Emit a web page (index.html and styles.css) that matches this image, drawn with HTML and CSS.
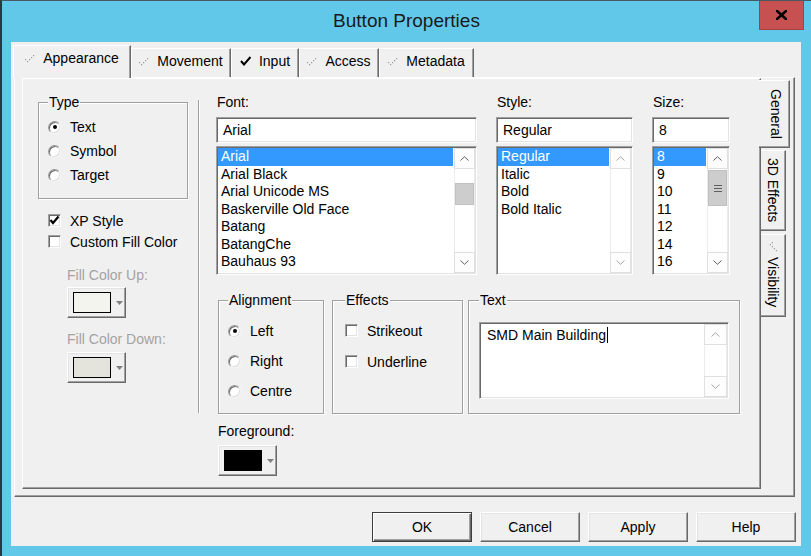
FILE: index.html
```html
<!DOCTYPE html>
<html lang="en">
<head>
    <meta charset="UTF-8">
    <title>Button Properties</title>
    <link rel="stylesheet" href="styles.css">
</head>
<body>
    <div class="window">
        <div class="titlebar">
            <div class="title">Button Properties</div>
            <div class="close">
                <svg width="11" height="10" viewBox="0 0 11 10"><path d="M1 1L10 9M10 1L1 9" stroke="#000" stroke-width="2.6" stroke-linecap="square"/></svg>
            </div>
        </div>

        <div class="client">
            <div class="tabstrip">
                <div class="tab active tab-appearance">
                    <svg class="dots" width="10" height="8" viewBox="0 0 10 8"><g fill="#9a9a9a"><rect x="0" y="4" width="1.2" height="1.2"/><rect x="2" y="6" width="1.2" height="1.2"/><rect x="4" y="4" width="1.2" height="1.2"/><rect x="6" y="2" width="1.2" height="1.2"/><rect x="8" y="0" width="1.2" height="1.2"/></g></svg>
                    <span>Appearance</span>
                </div>
                <div class="tab tab-movement">
                    <svg class="dots" width="10" height="8" viewBox="0 0 10 8"><g fill="#9a9a9a"><rect x="0" y="4" width="1.2" height="1.2"/><rect x="2" y="6" width="1.2" height="1.2"/><rect x="4" y="4" width="1.2" height="1.2"/><rect x="6" y="2" width="1.2" height="1.2"/><rect x="8" y="0" width="1.2" height="1.2"/></g></svg>
                    <span>Movement</span>
                </div>
                <div class="tab tab-input">
                    <svg width="11" height="10" viewBox="0 0 11 10"><polyline points="1,5 4,8.5 10.5,1" fill="none" stroke="#000" stroke-width="2"/></svg>
                    <span>Input</span>
                </div>
                <div class="tab tab-access">
                    <svg class="dots" width="10" height="8" viewBox="0 0 10 8"><g fill="#9a9a9a"><rect x="0" y="4" width="1.2" height="1.2"/><rect x="2" y="6" width="1.2" height="1.2"/><rect x="4" y="4" width="1.2" height="1.2"/><rect x="6" y="2" width="1.2" height="1.2"/><rect x="8" y="0" width="1.2" height="1.2"/></g></svg>
                    <span>Access</span>
                </div>
                <div class="tab tab-metadata">
                    <svg class="dots" width="10" height="8" viewBox="0 0 10 8"><g fill="#9a9a9a"><rect x="0" y="4" width="1.2" height="1.2"/><rect x="2" y="6" width="1.2" height="1.2"/><rect x="4" y="4" width="1.2" height="1.2"/><rect x="6" y="2" width="1.2" height="1.2"/><rect x="8" y="0" width="1.2" height="1.2"/></g></svg>
                    <span>Metadata</span>
                </div>
            </div>

            <div class="tabpanel">
                <div class="page">
                    <div class="left-col">
                        <fieldset class="group type-group">
                            <legend>Type</legend>
                            <div class="opt"><span class="radio on"></span>Text</div>
                            <div class="opt"><span class="radio"></span>Symbol</div>
                            <div class="opt"><span class="radio"></span>Target</div>
                        </fieldset>

                        <div class="check-row first">
                            <span class="check"><svg width="11" height="11" viewBox="0 0 11 11"><polyline points="1.5,5 4,8 9.5,1.5" fill="none" stroke="#000" stroke-width="2.2"/></svg></span>
                            XP Style
                        </div>
                        <div class="check-row"><span class="check"></span>Custom Fill Color</div>

                        <div class="fill-label">Fill Color Up:</div>
                        <div class="color-btn indent">
                            <span class="swatch up"></span>
                            <svg width="7" height="4" viewBox="0 0 7 4"><polygon points="0,0 7,0 3.5,4" fill="#808080"/></svg>
                        </div>
                        <div class="fill-label second">Fill Color Down:</div>
                        <div class="color-btn indent down-btn">
                            <span class="swatch down"></span>
                            <svg width="7" height="4" viewBox="0 0 7 4"><polygon points="0,0 7,0 3.5,4" fill="#808080"/></svg>
                        </div>
                    </div>

                    <div class="separator"></div>

                    <div class="props">
                        <div class="font-row">
                            <div class="font-col col-font">
                                <div class="label">Font:</div>
                                <div class="edit">Arial</div>
                                <div class="listbox">
                                    <div class="items">
                                        <div class="item sel">Arial</div>
                                        <div class="item">Arial Black</div>
                                        <div class="item">Arial Unicode MS</div>
                                        <div class="item">Baskerville Old Face</div>
                                        <div class="item">Batang</div>
                                        <div class="item">BatangChe</div>
                                        <div class="item">Bauhaus 93</div>
                                        <div class="item">Bell MT</div>
                                    </div>
                                    <div class="scrollbar">
                                        <div class="sb-btn"><svg width="9" height="5" viewBox="0 0 9 5"><polyline points="0.5,4.5 4.5,0.7 8.5,4.5" fill="none" stroke="#606060"/></svg></div>
                                        <div class="sb-track"><div class="sb-thumb font-thumb"></div></div>
                                        <div class="sb-btn"><svg width="9" height="5" viewBox="0 0 9 5"><polyline points="0.5,0.5 4.5,4.3 8.5,0.5" fill="none" stroke="#606060"/></svg></div>
                                    </div>
                                </div>
                            </div>

                            <div class="font-col col-style">
                                <div class="label">Style:</div>
                                <div class="edit">Regular</div>
                                <div class="listbox">
                                    <div class="items">
                                        <div class="item sel">Regular</div>
                                        <div class="item">Italic</div>
                                        <div class="item">Bold</div>
                                        <div class="item">Bold Italic</div>
                                    </div>
                                    <div class="scrollbar">
                                        <div class="sb-btn"><svg width="9" height="5" viewBox="0 0 9 5"><polyline points="0.5,4.5 4.5,0.7 8.5,4.5" fill="none" stroke="#a6a6a6"/></svg></div>
                                        <div class="sb-track"></div>
                                        <div class="sb-btn"><svg width="9" height="5" viewBox="0 0 9 5"><polyline points="0.5,0.5 4.5,4.3 8.5,0.5" fill="none" stroke="#a6a6a6"/></svg></div>
                                    </div>
                                </div>
                            </div>

                            <div class="font-col col-size">
                                <div class="label">Size:</div>
                                <div class="edit">8</div>
                                <div class="listbox">
                                    <div class="items">
                                        <div class="item sel">8</div>
                                        <div class="item">9</div>
                                        <div class="item">10</div>
                                        <div class="item">11</div>
                                        <div class="item">12</div>
                                        <div class="item">14</div>
                                        <div class="item">16</div>
                                        <div class="item">18</div>
                                    </div>
                                    <div class="scrollbar">
                                        <div class="sb-btn"><svg width="9" height="5" viewBox="0 0 9 5"><polyline points="0.5,4.5 4.5,0.7 8.5,4.5" fill="none" stroke="#606060"/></svg></div>
                                        <div class="sb-track">
                                            <div class="sb-thumb size-thumb">
                                                <svg width="8" height="7" viewBox="0 0 8 7"><path d="M0 0.5H8M0 3.5H8M0 6.5H8" stroke="#606060"/></svg>
                                            </div>
                                        </div>
                                        <div class="sb-btn"><svg width="9" height="5" viewBox="0 0 9 5"><polyline points="0.5,0.5 4.5,4.3 8.5,0.5" fill="none" stroke="#606060"/></svg></div>
                                    </div>
                                </div>
                            </div>
                        </div>

                        <div class="group-row">
                            <fieldset class="group align-group">
                                <legend>Alignment</legend>
                                <div class="opt tall"><span class="radio on"></span>Left</div>
                                <div class="opt tall"><span class="radio"></span>Right</div>
                                <div class="opt tall"><span class="radio"></span>Centre</div>
                            </fieldset>
                            <fieldset class="group effects-group">
                                <legend>Effects</legend>
                                <div class="check-row fx"><span class="check"></span>Strikeout</div>
                                <div class="check-row fx"><span class="check"></span>Underline</div>
                            </fieldset>
                            <fieldset class="group text-group">
                                <legend>Text</legend>
                                <div class="textedit">
                                    <div class="text-value">SMD Main Building<span class="caret"></span></div>
                                    <div class="scrollbar wide">
                                        <div class="sb-btn"><svg width="9" height="5" viewBox="0 0 9 5"><polyline points="0.5,4.5 4.5,0.7 8.5,4.5" fill="none" stroke="#a6a6a6"/></svg></div>
                                        <div class="sb-track"></div>
                                        <div class="sb-btn"><svg width="9" height="5" viewBox="0 0 9 5"><polyline points="0.5,0.5 4.5,4.3 8.5,0.5" fill="none" stroke="#a6a6a6"/></svg></div>
                                    </div>
                                </div>
                            </fieldset>
                        </div>

                        <div class="label fg-label">Foreground:</div>
                        <div class="color-btn fg-btn">
                            <span class="swatch black"></span>
                            <svg width="7" height="4" viewBox="0 0 7 4"><polygon points="0,0 7,0 3.5,4" fill="#808080"/></svg>
                        </div>
                    </div>
                </div>

                <div class="vtabs">
                    <div class="vtab active vtab-general">General</div>
                    <div class="vtab vtab-effects">3D Effects</div>
                    <div class="vtab vtab-visibility">
                        <svg class="dots rot" width="10" height="8" viewBox="0 0 10 8"><g fill="#9a9a9a"><rect x="0" y="4" width="1.2" height="1.2"/><rect x="2" y="6" width="1.2" height="1.2"/><rect x="4" y="4" width="1.2" height="1.2"/><rect x="6" y="2" width="1.2" height="1.2"/><rect x="8" y="0" width="1.2" height="1.2"/></g></svg>
                        <span>Visibility</span>
                    </div>
                </div>
            </div>

            <div class="buttons">
                <div class="btn default">OK</div>
                <div class="btn">Cancel</div>
                <div class="btn">Apply</div>
                <div class="btn">Help</div>
            </div>
        </div>
    </div>
</body>
</html>
```

FILE: styles.css
```css
* {
    box-sizing: border-box;
}

body {
    margin: 0;
    background: #62c8ea;
    font-family: "Liberation Sans", Arial, sans-serif;
    font-size: 14px;
    color: #000;
}

.window {
    width: 811px;
    height: 556px;
    background: #62c8ea;
    border-left: 2px solid #2c3740;
    border-top: 1px solid #4a5862;
    display: flex;
    flex-direction: column;
    overflow: hidden;
}

/* title bar */
.titlebar {
    height: 41px;
    display: grid;
    grid-template-columns: 1fr auto 1fr;
}

.titlebar .title {
    grid-column: 2;
    align-self: center;
    font-size: 19px;
    color: #1a1a1a;
    padding-bottom: 2px;
}

.titlebar .close {
    grid-column: 3;
    justify-self: end;
    width: 45px;
    height: 29px;
    margin-right: 7px;
    background: #c75050;
    border: 1px solid #a84040;
    border-top: 0;
    display: flex;
    align-items: center;
    justify-content: center;
}

/* dialog client */
.client {
    flex: 1;
    margin: 0 10px 10px 9px;
    background: #f0f0f0;
    padding: 3px 6px 0 3px;
    display: flex;
    flex-direction: column;
}

.tabstrip {
    display: flex;
    align-items: flex-end;
    height: 32px;
    margin-left: -1px;
}

.tab {
    height: 29px;
    display: flex;
    align-items: center;
    justify-content: center;
    gap: 8px;
    padding-bottom: 4px;
    background: #f0f0f0;
    border-top: 1px solid #fff;
    border-left: 1px solid #fff;
    border-right: 1px solid #696969;
    box-shadow: inset -1px 0 0 #a0a0a0;
}

.tab.active {
    height: 33px;
    margin-bottom: -1px;
    padding-bottom: 9px;
    position: relative;
    z-index: 1;
}

.tab-appearance { width: 118px; }
.tab-movement { width: 100px; }
.tab-input { width: 68px; }
.tab-access { width: 80px; }
.tab-metadata { width: 95px; }

.tab .dots {
    margin-top: 2px;
}

.tabpanel {
    height: 420px;
    display: flex;
    padding: 0 4px 7px 7px;
    border: 1px solid;
    border-color: #fff #696969 #696969 #fff;
    box-shadow: inset -1px -1px 0 #a0a0a0;
}

.page {
    width: 739px;
    display: flex;
    border: 1px solid;
    border-color: #fff #696969 #696969 #fff;
    box-shadow: inset -1px -1px 0 #a0a0a0;
}

/* vertical tabs */
.vtabs {
    display: flex;
    flex-direction: column;
    align-items: flex-start;
    padding-top: 2px;
}

.vtab {
    width: 25px;
    writing-mode: vertical-rl;
    display: flex;
    align-items: center;
    justify-content: center;
    gap: 6px;
    background: #f0f0f0;
    border-top: 1px solid #fff;
    border-right: 1px solid #696969;
    border-bottom: 1px solid #696969;
    box-shadow: inset -1px -1px 0 #a0a0a0;
}

.vtab.active {
    width: 31px;
    margin-left: -2px;
    padding-left: 3px;
    position: relative;
    z-index: 1;
}

.vtab-general { height: 68px; }
.vtab-effects { height: 81px; margin-top: 2px; }
.vtab-visibility { height: 83px; margin-top: 3px; }

.vtab .rot {
    transform: rotate(90deg);
}

/* left column */
.left-col {
    width: 175px;
    padding: 15px 0 0 15px;
}

.group {
    margin: 0;
    padding: 0;
    min-width: 0;
    border: 1px solid #a0a0a0;
    box-shadow: inset 1px 1px 0 #fff, 1px 1px 0 #fff;
}

.group legend {
    margin-left: 0;
    padding: 0 1px;
    line-height: 16px;
    background: #f0f0f0;
}

.type-group {
    width: 150px;
    padding: 5px 0 11px 9px;
}

.opt {
    display: flex;
    align-items: center;
    height: 24px;
}

.opt.tall {
    height: 30px;
}

.radio {
    width: 13px;
    height: 13px;
    margin-right: 9px;
    border-radius: 50%;
    background: #fff;
    border: 1px solid;
    border-color: #9a9a9a #f4f4f4 #f4f4f4 #9a9a9a;
    box-shadow: inset 1px 1px 0 #6a6a6a, inset -1px -1px 0 #dcdcdc;
    display: flex;
    align-items: center;
    justify-content: center;
}

.radio.on::after {
    content: "";
    width: 4px;
    height: 4px;
    border-radius: 50%;
    background: #000;
}

.check-row {
    display: flex;
    align-items: center;
    height: 21px;
    padding-left: 10px;
}

.check-row.first {
    margin-top: 11px;
}

.check {
    width: 13px;
    height: 13px;
    margin-right: 9px;
    background: #fff;
    border: 1px solid;
    border-color: #a0a0a0 #fff #fff #a0a0a0;
    box-shadow: inset 1px 1px 0 #696969, inset -1px -1px 0 #e3e3e3;
    display: flex;
    align-items: center;
    justify-content: center;
}

.fill-label {
    color: #a3a3a3;
    padding-left: 29px;
    line-height: 16px;
    margin-top: 15px;
}

.fill-label.second {
    margin-top: 13px;
}

.color-btn {
    width: 59px;
    height: 31px;
    display: flex;
    align-items: center;
    gap: 5px;
    padding-left: 5px;
    background: #f0f0f0;
    border: 1px solid;
    border-color: #fff #696969 #696969 #fff;
    box-shadow: inset -1px -1px 0 #a0a0a0, inset 1px 1px 0 #e3e3e3;
}

.color-btn.indent {
    margin-left: 29px;
    margin-top: 4px;
}

.color-btn.down-btn {
    margin-top: 5px;
}

.swatch {
    width: 38px;
    height: 21px;
    border: 1px solid #000;
}

.swatch.up { background: #f4f4ef; }
.swatch.down { background: #e4e4dc; }
.swatch.black { background: #000; }

.separator {
    width: 2px;
    height: 313px;
    margin-top: 21px;
    border-left: 1px solid #a0a0a0;
    border-right: 1px solid #fff;
}

/* font properties */
.props {
    flex: 1;
    padding: 15px 0 0 16px;
}

.font-row {
    display: flex;
    gap: 19px;
}

.col-font { width: 261px; }
.col-style { width: 137px; }
.col-size { width: 78px; }

.label {
    line-height: 16px;
    padding-left: 1px;
}

.edit {
    height: 26px;
    margin-top: 7px;
    padding: 0 6px;
    line-height: 24px;
    background: #fff;
    border: 1px solid;
    border-color: #a0a0a0 #fff #fff #a0a0a0;
    box-shadow: inset 1px 1px 0 #696969, inset -1px -1px 0 #e3e3e3;
}

.listbox {
    height: 129px;
    margin-top: 3px;
    padding: 1px;
    display: flex;
    background: #fff;
    border: 1px solid;
    border-color: #a0a0a0 #fff #fff #a0a0a0;
    box-shadow: inset 1px 1px 0 #696969, inset -1px -1px 0 #e3e3e3;
}

.items {
    flex: 1;
    overflow: hidden;
    margin-right: 1px;
}

.item {
    line-height: 17.5px;
    height: 17.5px;
    padding-left: 3px;
    white-space: nowrap;
}

.item.sel {
    background: #3399ff;
    color: #fff;
}

.scrollbar {
    width: 21px;
    display: flex;
    flex-direction: column;
    background: #fff;
}

.scrollbar.wide {
    width: 23px;
}

.sb-btn {
    height: 21px;
    display: flex;
    align-items: center;
    justify-content: center;
    background: #fdfdfd;
    border: 1px solid #e0e0e0;
}

.sb-track {
    flex: 1;
    border-left: 1px solid #ececec;
    border-right: 1px solid #ececec;
}

.sb-thumb {
    background: #cdcdcd;
    border: 1px solid #c0c0c0;
    display: flex;
    align-items: center;
    justify-content: center;
}

.font-thumb {
    height: 22px;
    margin-top: 14px;
}

.size-thumb {
    height: 36px;
    margin-top: 1px;
}

/* groups under the lists */
.group-row {
    display: flex;
    margin-top: 17px;
    padding-left: 2px;
}

.align-group {
    width: 106px;
    padding: 8px 0 6px 9px;
}

.effects-group {
    width: 131px;
    margin-left: 8px;
    padding: 7px 0 0 12px;
}

.check-row.fx {
    height: 31px;
    padding-left: 0;
}

.text-group {
    width: 272px;
    margin-left: 5px;
    padding: 14px 0 14px 10px;
}

.textedit {
    width: 250px;
    height: 77px;
    padding: 1px;
    display: flex;
    background: #fff;
    border: 1px solid;
    border-color: #a0a0a0 #fff #fff #a0a0a0;
    box-shadow: inset 1px 1px 0 #696969, inset -1px -1px 0 #e3e3e3;
}

.text-value {
    flex: 1;
    padding: 3px 0 0 6px;
    line-height: 17px;
}

.caret {
    display: inline-block;
    width: 1px;
    height: 16px;
    margin-left: 1px;
    background: #000;
    vertical-align: -3px;
}

.fg-label {
    margin-top: 9px;
    padding-left: 2px;
}

.fg-btn {
    margin-top: 6px;
    margin-left: 2px;
}

/* dialog buttons */
.buttons {
    display: flex;
    justify-content: flex-end;
    gap: 8px;
    margin-top: 15px;
    margin-right: -1px;
}

.btn {
    width: 100px;
    height: 30px;
    display: flex;
    align-items: center;
    justify-content: center;
    background: #f0f0f0;
    border: 1px solid;
    border-color: #fff #696969 #696969 #fff;
    box-shadow: inset -1px -1px 0 #a0a0a0, inset 1px 1px 0 #e3e3e3;
}

.btn.default {
    border: 1px solid #3c3c3c;
    box-shadow: inset 1px 1px 0 #fff, inset -1px -1px 0 #696969, inset -2px -2px 0 #a0a0a0;
}
```
